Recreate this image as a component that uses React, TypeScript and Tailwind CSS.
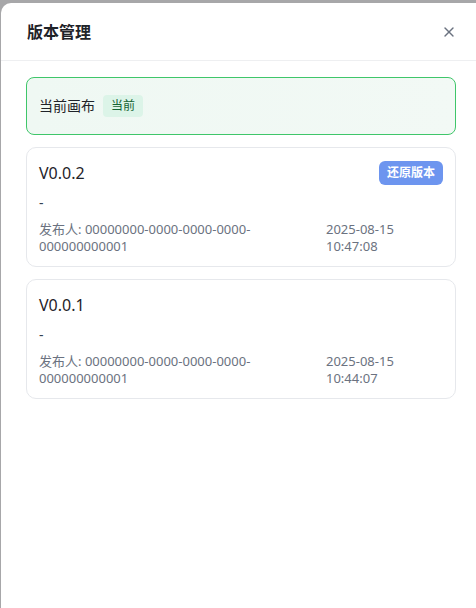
import { X } from 'lucide-react';

const FONT = '"Noto Sans", "Noto Sans CJK SC", sans-serif';

interface Version {
  name:      string;
  publisher: string;
  date:      string;
  time:      string;
  canRestore?: boolean;
}

const VERSIONS: Version[] = [
  { name: 'V0.0.2', publisher: '00000000-0000-0000-0000-000000000001', date: '2025-08-15', time: '10:47:08', canRestore: true },
  { name: 'V0.0.1', publisher: '00000000-0000-0000-0000-000000000001', date: '2025-08-15', time: '10:44:07' },
];

function VersionCard({ v }: { v: Version }) {
  return (
    <div className="rounded-[10px] border border-[#e6e8ec] bg-white px-[12px] pt-[13px] pb-[11px]">
      <div className="flex h-6 items-center justify-between">
        <span className="text-[16px] text-[#1f2329]">{v.name}</span>
        {v.canRestore && (
          <button className="h-6 rounded-md bg-[#6d95ef] px-2 text-xs font-semibold text-white">
            还原版本
          </button>
        )}
      </div>
      <div className="mt-2 text-sm leading-5 text-[#374151]">-</div>
      <div className="mt-2 flex justify-between gap-2 text-[13px] leading-[17px] text-[#6b7280]">
        <span className="break-all">发布人: {v.publisher.slice(0, 24)}<br />{v.publisher.slice(24)}</span>
        <span className="w-[117px] shrink-0">
          {v.date}
          <br />
          {v.time}
        </span>
      </div>
    </div>
  );
}

export default function App() {
  return (
    <div className="h-[608px] w-[476px] overflow-hidden bg-[#a7a7a9] pt-[3px] pl-[1px]" style={{ fontFamily: FONT }}>
      <div className="h-[620px] w-[480px] rounded-tl-[10px] bg-white">
        <div className="flex h-[58px] items-center justify-between border-b border-[#eeeff1] pl-[26px] pr-[24px]">
          <h2 className="text-base font-bold text-[#1f2329]">版本管理</h2>
          <X className="h-4 w-4 text-[#6b7280]" strokeWidth={2} />
        </div>

        <div className="space-y-3 px-[25px] pt-4">
          <div className="flex h-[58px] items-center gap-2 rounded-[8px] border border-[#3fc66a] bg-gradient-to-r from-[#eff8f3] to-[#f2f9f5] px-[12px]">
            <span className="text-sm text-[#1f2329]">当前画布</span>
            <span className="rounded-[4px] bg-[#dcf4e8] px-2 py-[3px] text-xs text-[#166534]">当前</span>
          </div>

          {VERSIONS.map((v) => (
            <VersionCard key={v.name} v={v} />
          ))}
        </div>
      </div>
    </div>
  );
}
